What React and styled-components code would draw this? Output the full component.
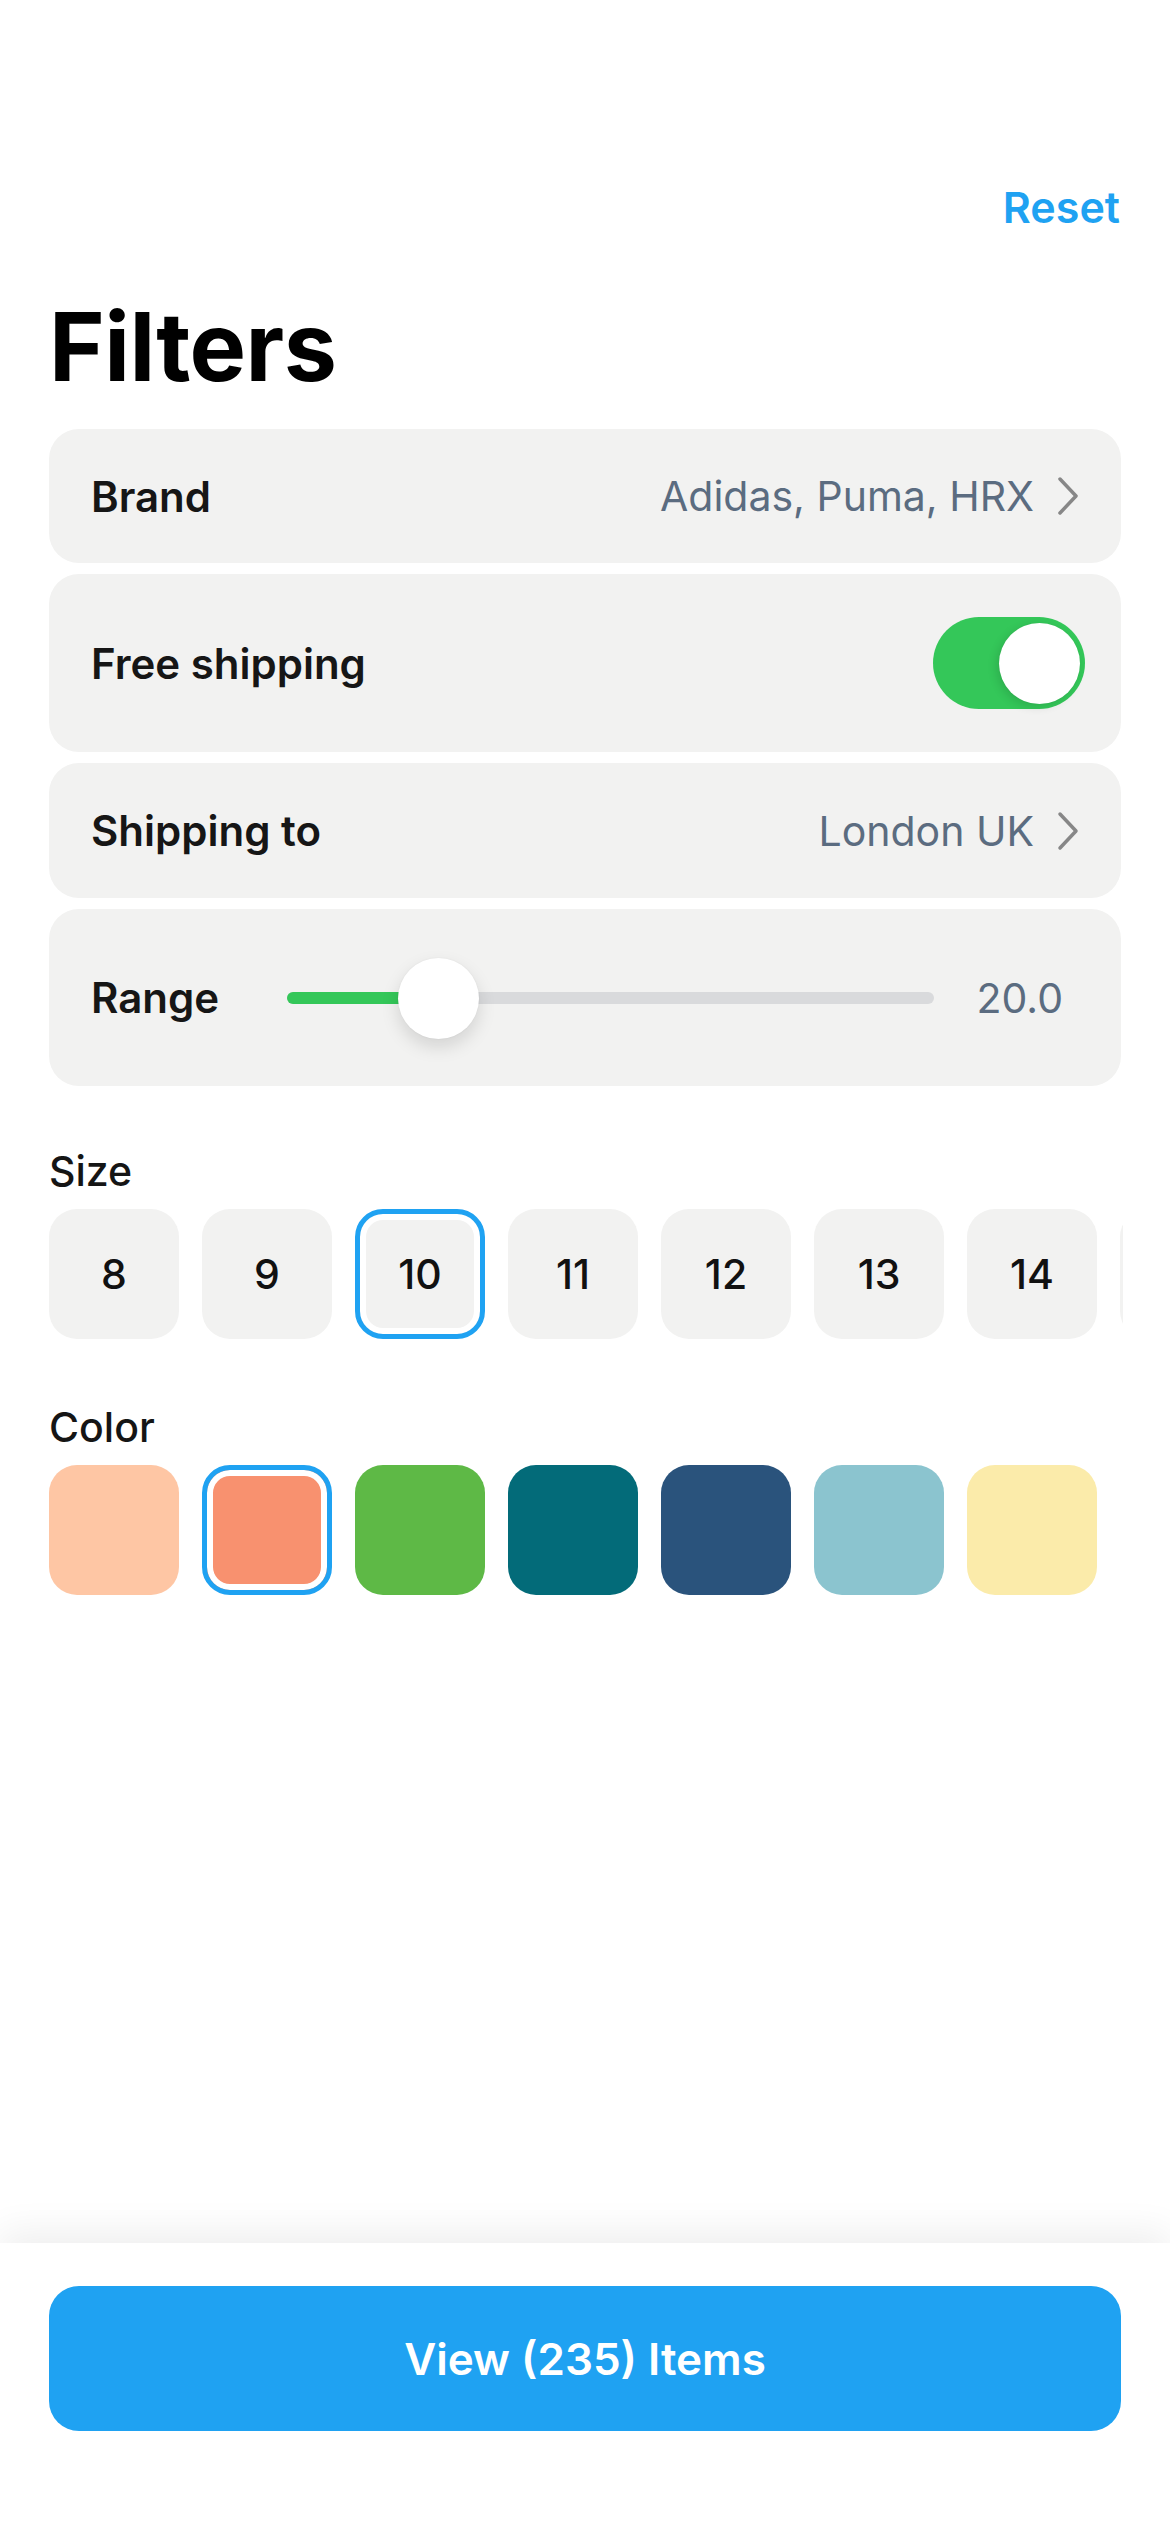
import React from "react";
import styled, { createGlobalStyle } from "styled-components";

const GlobalStyle = createGlobalStyle`
  html, body {
    margin: 0;
    padding: 0;
    background: #ffffff;
    font-family: Inter, "Noto Sans", "Liberation Sans", sans-serif;
    color: #141414;
  }
  * { box-sizing: border-box; }
`;

const Page = styled.div`
  min-height: 100vh;
  display: flex;
  flex-direction: column;
  background: #fff;
`;

const Content = styled.main`
  padding: 182px 49px 0 49px;
  display: flex;
  flex-direction: column;
`;

const TopBar = styled.div`
  display: flex;
  justify-content: flex-end;
  height: 50px;
  padding-right: 1px;
`;

const ResetButton = styled.button`
  border: none;
  background: none;
  padding: 0;
  font-family: inherit;
  font-size: 43px;
  line-height: 50px;
  font-weight: 600;
  color: #1fa2f2;
`;

const Title = styled.h1`
  margin: 60px 0 0;
  font-size: 95px;
  line-height: 110px;
  font-weight: 700;
  letter-spacing: -0.5px;
  color: #000;
`;

const CardList = styled.div`
  margin-top: 27px;
  display: flex;
  flex-direction: column;
  gap: 11px;
`;

const Card = styled.div`
  height: ${(p) => p.h}px;
  background: #f2f2f1;
  border-radius: 30px;
  display: flex;
  align-items: center;
  padding: 0 ${(p) => p.pr || 41}px 0 42px;
`;

const Label = styled.span`
  font-size: 42px;
  font-weight: 600;
  color: #161616;
  width: ${(p) => (p.w ? `${p.w}px` : "auto")};
  flex-shrink: 0;
`;

const Value = styled.span`
  margin-left: auto;
  font-size: 41px;
  font-weight: 400;
  color: #5b6c80;
`;

const Chevron = styled.svg`
  width: 24px;
  height: 40px;
  margin-left: 22px;
  flex-shrink: 0;
`;

const Toggle = styled.div`
  margin-left: auto;
  width: 152px;
  height: 92px;
  border-radius: 46px;
  background: #34c759;
  display: flex;
  align-items: center;
  justify-content: flex-end;
  padding: 0 5px;
`;

const ToggleKnob = styled.div`
  width: 81px;
  height: 81px;
  border-radius: 50%;
  background: #fff;
  box-shadow: -3px 3px 10px rgba(0, 0, 0, 0.12), 0 0 1px rgba(0, 0, 0, 0.1);
`;

const Track = styled.div`
  position: relative;
  flex: 1;
  height: 12px;
  border-radius: 6px;
  background: #d9dadc;
`;

const TrackFill = styled.div`
  height: 100%;
  border-radius: 6px;
  background: #34c759;
`;

const SliderKnob = styled.div`
  position: absolute;
  top: 50%;
  width: 81px;
  height: 81px;
  margin: -40px 0 0 -40px;
  border-radius: 50%;
  background: #fff;
  box-shadow: 0 8px 18px rgba(0, 0, 0, 0.13), 0 0 2px rgba(0, 0, 0, 0.06);
`;

const RangeValue = styled.span`
  margin-left: 43px;
  font-size: 41px;
  color: #5b6c80;
`;

const SectionLabel = styled.h2`
  margin: ${(p) => p.mt}px 0 0;
  font-size: 41px;
  line-height: 50px;
  font-weight: 500;
  color: #151515;
`;

const ChipRow = styled.div`
  margin-top: 13px;
  display: flex;
  gap: 23px;
  overflow: hidden;
  width: 1074px;
`;

const Chip = styled.div`
  flex: 0 0 130px;
  height: 130px;
  border-radius: 28px;
  background: ${(p) => p.color || "#f2f2f1"};
  display: flex;
  align-items: center;
  justify-content: center;
  font-size: 41px;
  font-weight: 500;
  color: #111;
  ${(p) =>
    p.selected &&
    `
    border: 5px solid #1fa2f2;
    box-shadow: inset 0 0 0 6px #ffffff;
  `}
`;

const BottomBar = styled.footer`
  margin-top: auto;
  height: 289px;
  background: #fff;
  box-shadow: 0 -10px 36px rgba(0, 0, 0, 0.07);
  padding: 43px 49px 0 49px;
`;

const PrimaryButton = styled.button`
  width: 100%;
  height: 145px;
  border: none;
  border-radius: 30px;
  background: #1fa2f2;
  color: #fff;
  font-family: inherit;
  font-size: 44px;
  font-weight: 600;
`;

const sizes = [8, 9, 10, 11, 12, 13, 14];
const colors = ["#fec6a4", "#f8916f", "#5eb946", "#036b79", "#2a537c", "#8bc4cf", "#fbebaa"];

function ChevronIcon() {
  return (
    <Chevron viewBox="0 0 24 40">
      <path d="M4 3 L20 20 L4 37" fill="none" stroke="#878787" strokeWidth="3.5" strokeLinecap="round" strokeLinejoin="round" />
    </Chevron>
  );
}

export default function App() {
  const range = 23.3;
  return (
    <Page>
      <GlobalStyle />
      <Content>
        <TopBar>
          <ResetButton>Reset</ResetButton>
        </TopBar>
        <Title>Filters</Title>
        <CardList>
          <Card h={134}>
            <Label>Brand</Label>
            <Value>Adidas, Puma, HRX</Value>
            <ChevronIcon />
          </Card>
          <Card h={178} pr={36}>
            <Label>Free shipping</Label>
            <Toggle>
              <ToggleKnob />
            </Toggle>
          </Card>
          <Card h={135}>
            <Label>Shipping to</Label>
            <Value>London UK</Value>
            <ChevronIcon />
          </Card>
          <Card h={177} pr={58}>
            <Label w={196}>Range</Label>
            <Track>
              <TrackFill style={{ width: `${range}%` }} />
              <SliderKnob style={{ left: `${range}%` }} />
            </Track>
            <RangeValue>20.0</RangeValue>
          </Card>
        </CardList>

        <SectionLabel mt={60}>Size</SectionLabel>
        <ChipRow>
          {sizes.map((s) => (
            <Chip key={s} selected={s === 10}>
              {s}
            </Chip>
          ))}
          <Chip aria-hidden="true" />
        </ChipRow>

        <SectionLabel mt={63}>Color</SectionLabel>
        <ChipRow>
          {colors.map((c, i) => (
            <Chip key={c} color={c} selected={i === 1} />
          ))}
        </ChipRow>
      </Content>
      <BottomBar>
        <PrimaryButton>View (235) Items</PrimaryButton>
      </BottomBar>
    </Page>
  );
}
